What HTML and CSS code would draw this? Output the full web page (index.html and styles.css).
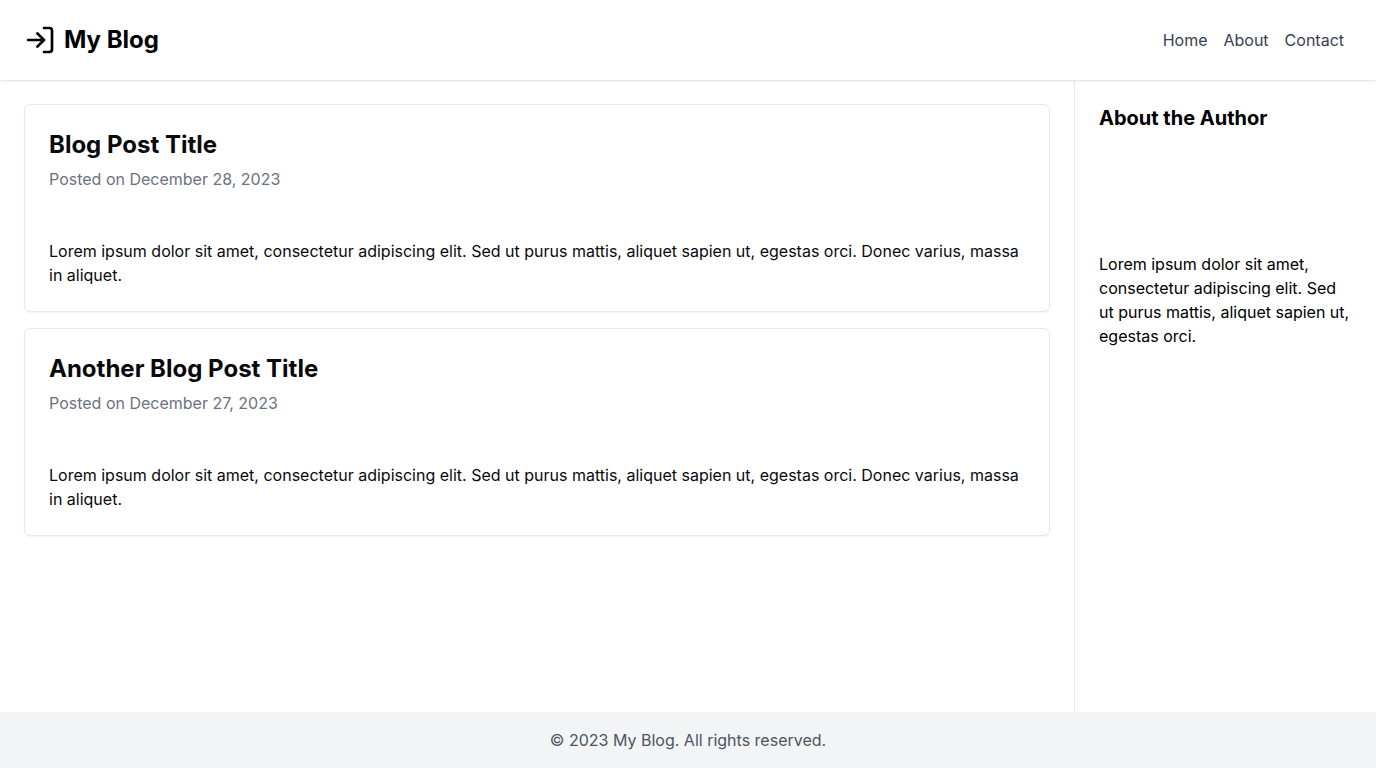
FILE: index.html
```html
<!DOCTYPE html>
<html lang="en">
<head>
<meta charset="utf-8">
<meta name="viewport" content="width=device-width, initial-scale=1">
<title>My Blog</title>
<link rel="stylesheet" href="styles.css">
</head>
<body class="page">
<header class="site-header">
  <div class="brand">
    <svg class="brand-icon" viewBox="0 0 24 24" fill="none" stroke="currentColor" stroke-width="2" stroke-linecap="round" stroke-linejoin="round" aria-hidden="true">
      <path d="M15 3h4a2 2 0 0 1 2 2v14a2 2 0 0 1-2 2h-4"/>
      <path d="M10 17l5-5-5-5"/>
      <path d="M15 12H3"/>
    </svg>
    <h1 class="brand-name">My Blog</h1>
  </div>
  <nav class="site-nav">
    <a class="nav-link" href="#home">Home</a>
    <a class="nav-link" href="#about">About</a>
    <a class="nav-link" href="#contact">Contact</a>
  </nav>
</header>
<div class="content">
  <main class="posts">
    <article class="post">
      <header class="post-header">
        <h2 class="post-title">Blog Post Title</h2>
        <p class="post-date">Posted on December 28, 2023</p>
      </header>
      <p class="post-body">Lorem ipsum dolor sit amet, consectetur adipiscing elit. Sed ut purus mattis, aliquet sapien ut, egestas orci. Donec varius, massa in aliquet.</p>
    </article>
    <article class="post">
      <header class="post-header">
        <h2 class="post-title">Another Blog Post Title</h2>
        <p class="post-date">Posted on December 27, 2023</p>
      </header>
      <p class="post-body">Lorem ipsum dolor sit amet, consectetur adipiscing elit. Sed ut purus mattis, aliquet sapien ut, egestas orci. Donec varius, massa in aliquet.</p>
    </article>
  </main>
  <aside class="sidebar">
    <h2 class="sidebar-title">About the Author</h2>
    <p class="sidebar-text">Lorem ipsum dolor sit amet, consectetur adipiscing elit. Sed ut purus mattis, aliquet sapien ut, egestas orci.</p>
  </aside>
</div>
<footer class="site-footer">
  <p class="copyright">© 2023 My Blog. All rights reserved.</p>
</footer>
</body>
</html>
```
FILE: styles.css
```css
*, *::before, *::after { box-sizing: border-box; }
h1, h2, p { margin: 0; }

.page {
  display: flex;
  flex-direction: column;
  min-height: 100vh;
  margin: 0;
  background: #fff;
  color: #000;
  font: 16px/24px Inter, "Liberation Sans", sans-serif;
}

.site-header {
  display: flex;
  align-items: center;
  justify-content: space-between;
  padding: 24px;
  box-shadow: 0 1px 3px rgba(0, 0, 0, 0.1), 0 1px 2px -1px rgba(0, 0, 0, 0.1);
}
.brand { display: flex; align-items: center; gap: 8px; }
.brand-icon { width: 32px; height: 32px; }
.brand-name { font-size: 24px; line-height: 32px; font-weight: 700; }
.site-nav { display: flex; gap: 16px; padding-right: 8px; }
.nav-link { color: #374151; text-decoration: none; }

.content { display: flex; flex: 1; }
.posts {
  display: flex;
  flex: 1;
  flex-direction: column;
  gap: 16px;
  padding: 24px;
}
.post {
  padding: 24px;
  border: 1px solid #e5e7eb;
  border-radius: 6px;
  box-shadow: 0 1px 2px rgba(0, 0, 0, 0.05);
  color: #09090b;
}
.post-header { display: grid; gap: 6px; padding-bottom: 48px; }
.post-title { font-size: 24px; line-height: 32px; font-weight: 700; }
.post-date { color: #6b7280; }

.sidebar {
  width: 302px;
  padding: 24px;
  border-left: 1px solid #e5e7eb;
}
.sidebar-title {
  padding-bottom: 120px;
  font-size: 20px;
  line-height: 28px;
  font-weight: 700;
}

.site-footer {
  padding: 16px;
  background: #f3f4f6;
  color: #4b5563;
  text-align: center;
}
```
